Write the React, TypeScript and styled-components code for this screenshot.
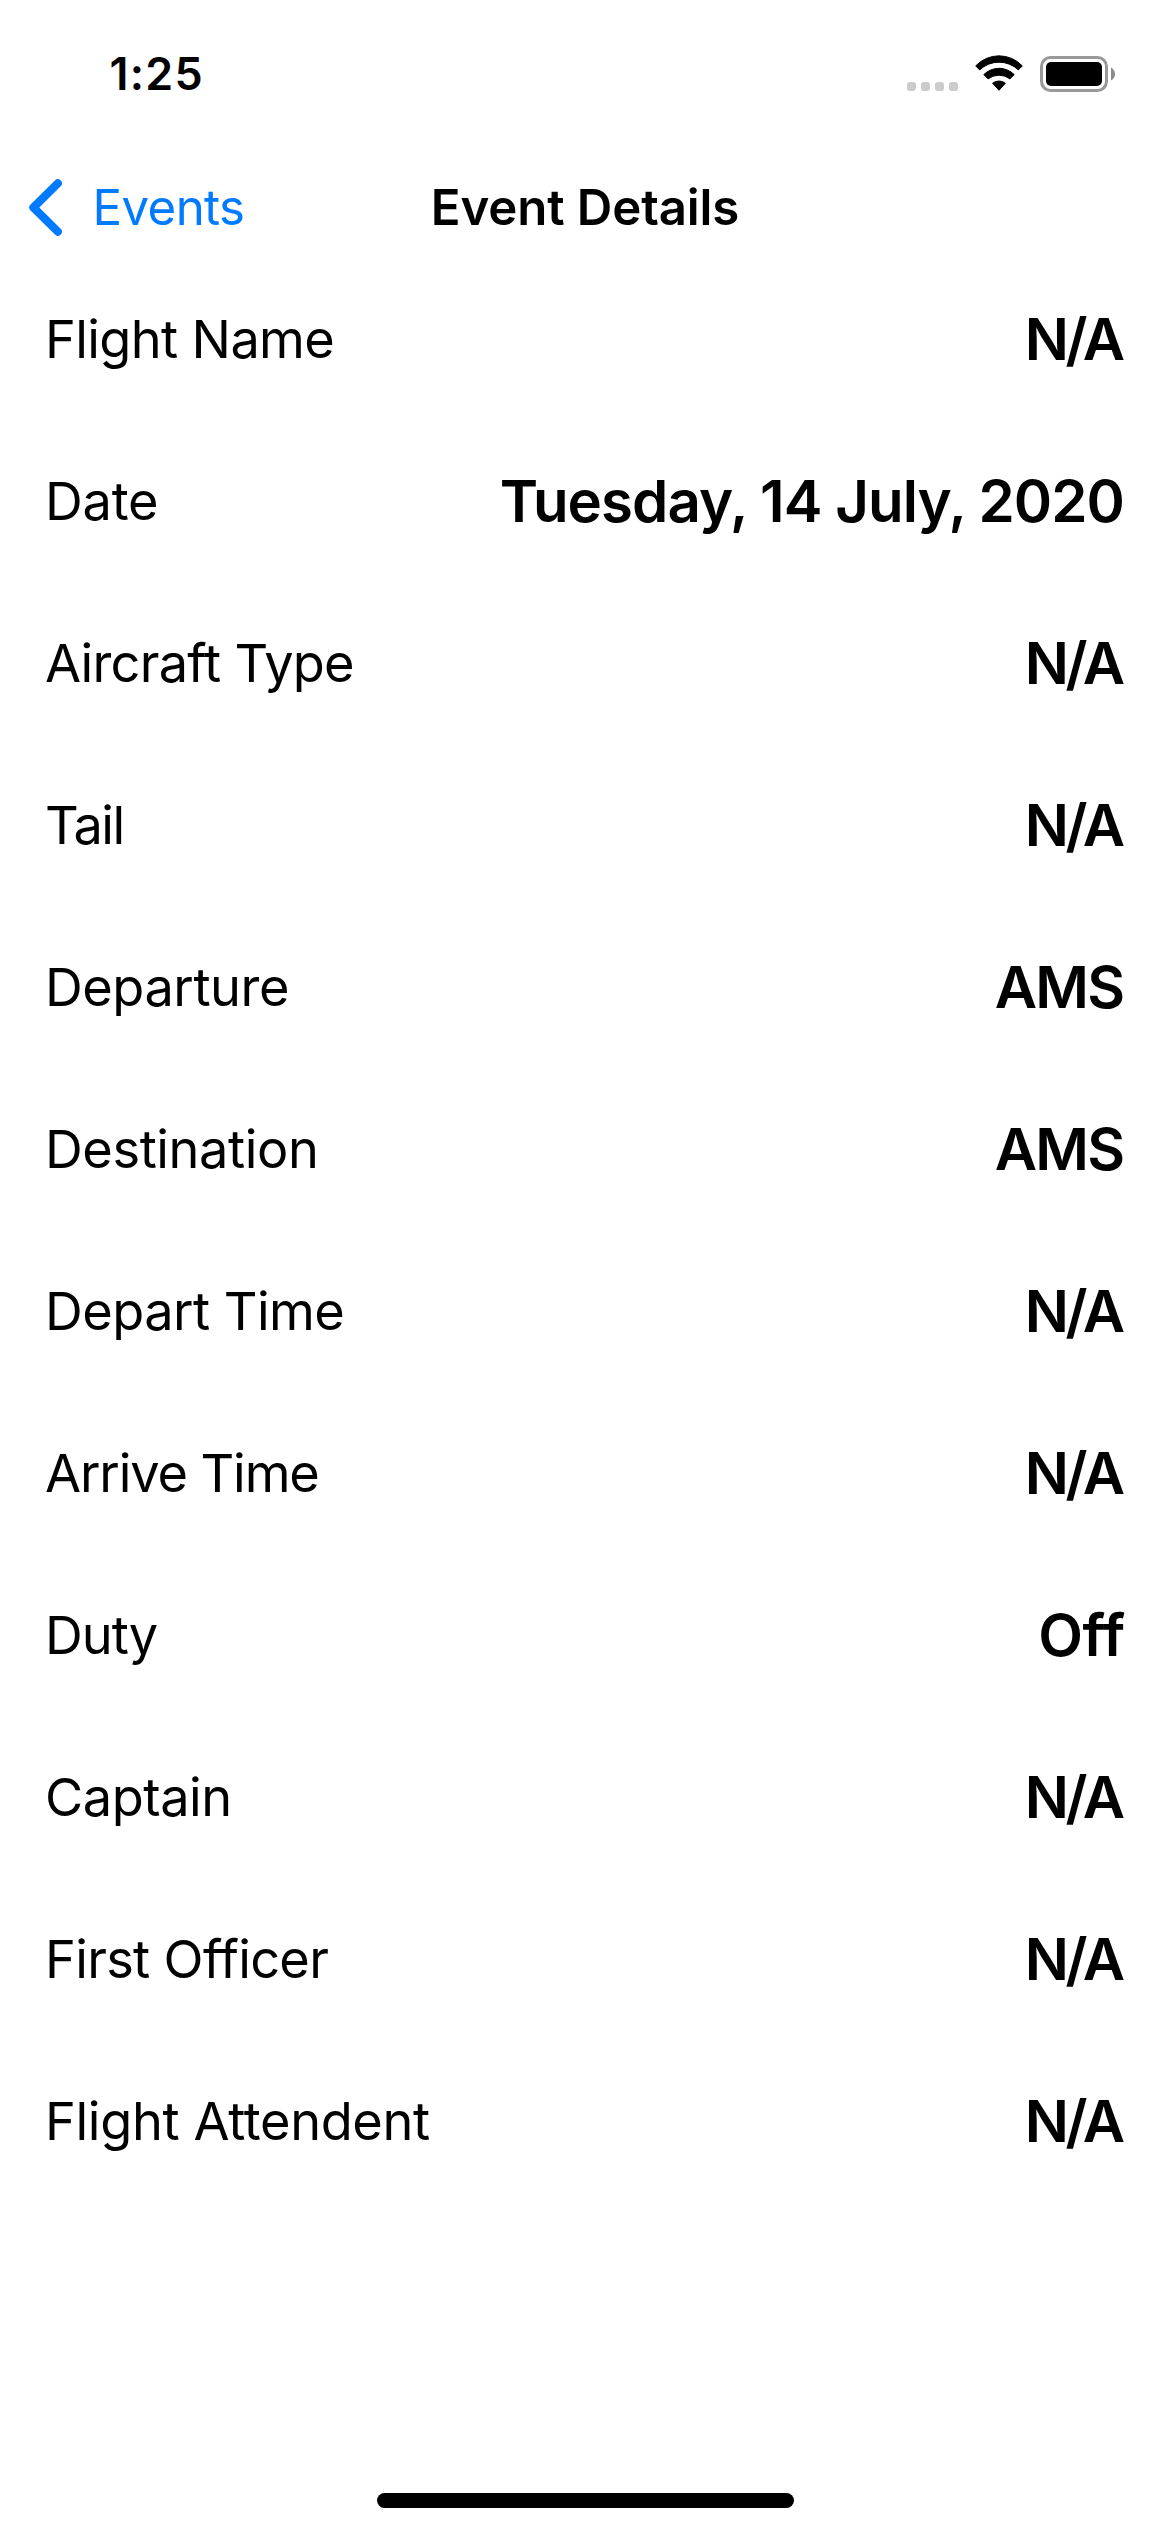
import React from "react";
import styled, { createGlobalStyle } from "styled-components";

const GlobalStyle = createGlobalStyle`
  * { box-sizing: border-box; }
  body {
    margin: 0;
    background: #fff;
    color: #000;
    font-family: Inter, "Liberation Sans", sans-serif;
  }
`;

const Screen = styled.main`
  width: 1170px;
  height: 2532px;
  display: flex;
  flex-direction: column;
  background: #fff;
  overflow: hidden;
`;

const StatusBar = styled.header`
  height: 156px;
  padding: 0 55px 8px 109.5px;
  display: flex;
  justify-content: space-between;
  align-items: center;
`;

const Time = styled.span`
  font-size: 44.8px;
  font-weight: 600;
  line-height: 56px;
  letter-spacing: 1.25px;
`;

const Indicators = styled.div`
  display: flex;
  align-items: center;
  gap: 17px;
  svg { display: block; }
`;

const NavBar = styled.nav`
  height: 102px;
  padding: 0 29px;
  display: grid;
  grid-template-columns: 1fr auto 1fr;
  align-items: center;
`;

const Back = styled.a`
  display: flex;
  align-items: center;
  gap: 30.5px;
  color: #007aff;
  font-size: 49.2px;
  line-height: 60px;
  letter-spacing: -0.6px;
`;

const Title = styled.h1`
  margin: 0;
  font-size: 49.2px;
  font-weight: 600;
  line-height: 60px;
  letter-spacing: -0.12px;
`;

const List = styled.dl`
  margin: 0;
  display: flex;
  flex-direction: column;
`;

const Row = styled.div`
  height: 162px;
  padding: 0 45px;
  display: flex;
  justify-content: space-between;
  align-items: center;
`;

const Label = styled.dt<{ $tracking: number }>`
  font-size: 52.3px;
  line-height: 64px;
  letter-spacing: ${(p) => p.$tracking}px;
`;

const Value = styled.dd<{ $tracking: number }>`
  margin: 0 ${(p) => -p.$tracking}px 0 0;
  font-size: 58.2px;
  font-weight: 600;
  line-height: 72px;
  letter-spacing: ${(p) => p.$tracking}px;
`;

const HomeBar = styled.div`
  width: 417px;
  height: 15px;
  margin: auto auto 24px 377px;
  border-radius: 8px;
  background: #000;
`;

interface Field {
  label: string;
  labelTracking: number;
  value: string;
}

const valueTracking: Record<string, number> = {
  "N/A": -3.4,
  "Tuesday, 14 July, 2020": -0.94,
  AMS: -1.75,
  Off: -0.45,
};

const fields: Field[] = [
  { label: "Flight Name", labelTracking: -0.63, value: "N/A" },
  { label: "Date", labelTracking: -0.2, value: "Tuesday, 14 July, 2020" },
  { label: "Aircraft Type", labelTracking: -0.75, value: "N/A" },
  { label: "Tail", labelTracking: -1.5, value: "N/A" },
  { label: "Departure", labelTracking: -0.44, value: "AMS" },
  { label: "Destination", labelTracking: -0.4, value: "AMS" },
  { label: "Depart Time", labelTracking: -0.54, value: "N/A" },
  { label: "Arrive Time", labelTracking: -1.12, value: "N/A" },
  { label: "Duty", labelTracking: -1.0, value: "Off" },
  { label: "Captain", labelTracking: -0.45, value: "N/A" },
  { label: "First Officer", labelTracking: -0.68, value: "N/A" },
  { label: "Flight Attendent", labelTracking: -0.35, value: "N/A" },
];

const CellularDots = () => (
  <svg width="51" height="38" viewBox="0 0 51 38" fill="#cbcbcb">
    {[0, 14, 28, 42].map((x) => (
      <rect key={x} x={x} y="27" width="9" height="9" rx="3" />
    ))}
  </svg>
);

const Wifi = () => (
  <svg width="48" height="38" viewBox="0 0 48 38" stroke="#000" strokeWidth="1" strokeLinejoin="round">
    <path d="M.7 10.9A32 32 0 0 1 47.3 10.9L43.3 14.9A28 28 0 0 0 4.7 14.9Z" />
    <path d="M8.8 19.6A21.5 21.5 0 0 1 39.2 19.6L34.9 23.9A17.8 17.8 0 0 0 13.1 23.9Z" />
    <path d="M17.6 28.2A10.5 10.5 0 0 1 30.4 28.2L24 35.3Z" />
  </svg>
);

const Battery = () => (
  <svg width="75" height="38" viewBox="0 0 75 38">
    <rect x="1.5" y="2.5" width="65" height="33" rx="9" fill="none" stroke="#999" strokeWidth="3" />
    <rect x="6" y="7" width="56" height="24" rx="5" />
    <path d="M71 12.5Q75 15 75 19T71 25.5Z" fill="#8c8c8c" />
  </svg>
);

const Chevron = () => (
  <svg width="33" height="57" viewBox="0 0 33 57" fill="none">
    <path
      d="M28.8 4.3L4.4 28.5L28.8 52.7"
      stroke="currentColor"
      strokeWidth="8.2"
      strokeLinecap="round"
      strokeLinejoin="round"
    />
  </svg>
);

export default function App() {
  return (
    <Screen>
      <GlobalStyle />
      <StatusBar>
        <Time>1:25</Time>
        <Indicators>
          <CellularDots />
          <Wifi />
          <Battery />
        </Indicators>
      </StatusBar>
      <NavBar>
        <Back>
          <Chevron />
          Events
        </Back>
        <Title>Event Details</Title>
      </NavBar>
      <List>
        {fields.map(({ label, labelTracking, value }) => (
          <Row key={label}>
            <Label $tracking={labelTracking}>{label}</Label>
            <Value $tracking={valueTracking[value]}>{value}</Value>
          </Row>
        ))}
      </List>
      <HomeBar />
    </Screen>
  );
}
